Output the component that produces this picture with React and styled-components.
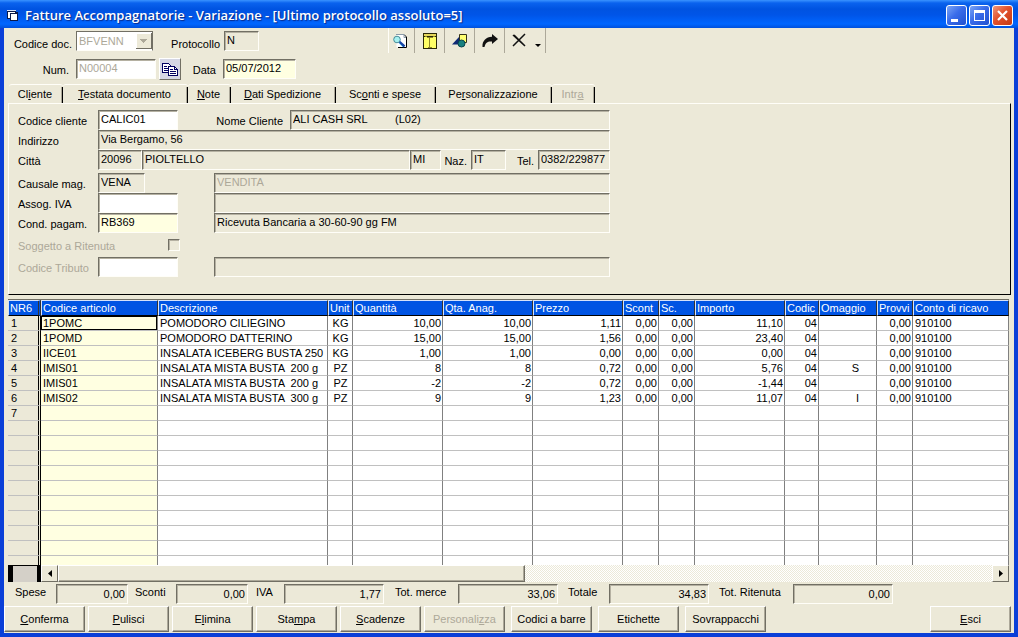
import React from "react";
import styled, { createGlobalStyle } from "styled-components";

const GlobalStyle = createGlobalStyle`
* { box-sizing: border-box; }
body {
  margin: 0;
  background: #ece9d8;
}
body, button, input, select {
  font-family: "Liberation Sans", Arial, sans-serif;
  font-size: 11px;
  line-height: 14px;
  color: #000;
}
`;

const Window = styled.div`
  display: flex;
  flex-direction: column;
  height: 100vh;
  min-height: 480px;
  background: #0a3fd8;
  padding: 0 4px 4px;
`;

const TitleBar = styled.header`
  display: flex;
  align-items: center;
  height: 28px;
  flex: none;
  margin: 0 -4px;
  padding: 2px 5px 0 6px;
  background: linear-gradient(#3a93ff 0, #0a62ee 3px, #0053e1 9px, #0055e8 15px, #0066ff 24px, #0050dc 28px);
`;

const Title = styled.h1`
  flex: 1;
  margin: 0 0 0 6px;
  color: #fff;
  font: 600 13px/20px "Open Sans", "Noto Sans", sans-serif;
  text-shadow: 1px 1px 1px #0a2a88;
  white-space: nowrap;
`;

const CaptionButton = styled.button`
  width: 21px;
  height: 21px;
  margin-left: 2px;
  padding: 0;
  border: 1px solid #fff;
  border-radius: 3px;
  background: ${(p) =>
    p.$close
      ? "linear-gradient(135deg, #f0987c, #e2512c 45%, #c43a14)"
      : "linear-gradient(135deg, #7ba5f5, #3a6cea 45%, #2050cf)"};
  svg { display: block; }
`;

const Client = styled.main`
  display: flex;
  flex-direction: column;
  flex: 1;
  min-height: 0;
  background: #ece9d8;
`;

const Top = styled.div`
  display: flex;
  align-items: flex-start;
  flex: none;
  height: 56px;
`;

const DocFields = styled.div`
  width: 384px;
  flex: none;
  padding-top: 3px;
`;

const Line = styled.div`
  display: flex;
  align-items: ${(p) => (p.$low ? "flex-end" : "center")};
  height: 20px;
  margin-top: ${(p) => p.$top || 0}px;
`;

const Label = styled.label`
  flex: none;
  width: ${(p) => p.$w}px;
  padding-top: 1px;
  padding-right: ${(p) => (p.$near ? 4 : p.$right ? 7 : 0)}px;
  text-align: ${(p) => (p.$right || p.$near ? "right" : "left")};
  color: ${(p) => (p.$off ? "#aca899" : "#000")};
  white-space: nowrap;
`;

const Field = styled.input`
  flex: ${(p) => (p.$w ? "none" : "1")};
  width: ${(p) => (p.$w ? p.$w + "px" : "auto")};
  min-width: 0;
  height: 20px;
  margin-left: ${(p) => p.$left || 0}px;
  padding: ${(p) => (p.$num ? "0 2px" : "0 2px 2px")};
  border: 1px solid;
  border-color: #716f64 #fffef8 #fffef8 #716f64;
  border-radius: 0;
  outline: none;
  box-shadow: inset 1px 1px #b5b1a2;
  background: ${(p) => p.$bg || "#ece9d8"};
  color: ${(p) => (p.$off ? "#aca899" : "#000")};
  text-align: ${(p) => (p.$num ? "right" : "left")};
`;

const SelectBox = styled.div`
  position: relative;
  width: 77px;
  height: 20px;
  svg {
    position: absolute;
    right: 1px;
    top: 2px;
    pointer-events: none;
  }
`;

const Select = styled.select`
  width: 100%;
  height: 20px;
  padding: 0 2px;
  appearance: none;
  border: 1px solid;
  border-color: #716f64 #716f64 #fffef8 #716f64;
  border-radius: 0;
  background: #fff;
  color: #aca899;
  opacity: 1;
`;

const CopyButton = styled.button`
  width: 22px;
  height: 22px;
  margin-left: 3px;
  padding: 2px;
  border: 1px solid;
  border-color: #fff #716f64 #716f64 #fff;
  background: #d4d6e4;
  svg { display: block; }
`;

const Toolbar = styled.div`
  display: flex;
  height: 25px;
  border-left: 1px solid #fffef8;
`;

const ToolButton = styled.button`
  display: flex;
  align-items: center;
  justify-content: ${(p) => (p.$wide ? "flex-start" : "center")};
  width: ${(p) => (p.$wide ? 41 : p.$first ? 26 : 30)}px;
  height: 25px;
  padding: 0 ${(p) => (p.$first ? 4 : 0)}px 0 ${(p) => (p.$wide ? 6 : 0)}px;
  border: 0;
  border-right: 1px solid #aca899;
  background: none;
`;

const Tabs = styled.div`
  display: flex;
  flex: none;
  height: 19px;
  padding-left: 5px;
`;

const Tab = styled.button`
  position: relative;
  width: ${(p) => p.$w}px;
  height: 19px;
  padding: 0 2px 0 0;
  border: 0;
  border-top: 1px solid #fffef8;
  border-radius: 3px 3px 0 0;
  background: none;
  color: ${(p) => (p.disabled ? "#aca899" : "#000")};
  white-space: nowrap;
  &::after {
    content: "";
    position: absolute;
    right: 0;
    top: 2px;
    bottom: 0;
    width: 2px;
    background: linear-gradient(90deg, #aca899 50%, #000 50%);
  }
`;

const Panel = styled.section`
  flex: none;
  margin: 0 3px 0 4px;
  padding: 6px 0 17px 9px;
  border: 1px solid;
  border-color: #fffef8 #000 #000 #fffef8;
`;

const FormBody = styled.div`
  max-width: 592px;
`;

const CheckBox = styled.input`
  appearance: none;
  width: 12px;
  height: 12px;
  margin: 0;
  border: 1px solid;
  border-color: #716f64 #fffef8 #fffef8 #716f64;
  box-shadow: inset 1px 1px #b5b1a2;
  background: #ece9d8;
`;

const GridFrame = styled.section`
  display: flex;
  flex-direction: column;
  flex: 1;
  min-height: 0;
  margin: 4px 5px 0 4px;
  border-top: 1px solid #716f64;
`;

const GridView = styled.div`
  flex: 1;
  min-height: 0;
  overflow: hidden;
  background: #fff;
`;

const Table = styled.table`
  width: 100%;
  table-layout: fixed;
  border-collapse: separate;
  border-spacing: 0;
`;

const HeadCell = styled.th`
  height: 16px;
  padding: 0 0 0 1px;
  overflow: hidden;
  border: 1px solid;
  border-color: #d6e2fa #333 #000 #d6e2fa;
  border-right-width: ${(p) => (p.$first ? 3 : 1)}px;
  border-right-style: ${(p) => (p.$first ? "double" : "solid")};
  background: #0054e3;
  color: #fff;
  font-weight: 400;
  line-height: 14px;
  text-align: left;
  white-space: nowrap;
`;

const Cell = styled.td`
  height: 15px;
  padding: 1px ${(p) => (p.$pad ? p.$pad : 1)}px 0 2px;
  overflow: hidden;
  border-right: 1px solid #808080;
  border-bottom: 1px solid #c0c0c0;
  background: ${(p) => (p.$key ? "#ffffe1" : "#fff")};
  box-shadow: ${(p) => (p.$active ? "inset 0 0 0 1px #000" : "none")};
  line-height: 13px;
  text-align: ${(p) => p.$align || "left"};
  white-space: pre;
`;

const RowHead = styled.th`
  height: 15px;
  padding: 1px 0 0 3px;
  border-right: 3px double #000;
  border-bottom: 1px solid #c0c0c0;
  background: #ece9d8;
  font-weight: 400;
  line-height: 13px;
  text-align: left;
`;

const ScrollRow = styled.div`
  display: flex;
  flex: none;
  height: 17px;
`;

const Splitter = styled.div`
  width: 33px;
  border: solid #000;
  border-width: 1px 4px 0 5px;
  background: #d4d0c8;
`;

const ScrollButton = styled.button`
  display: flex;
  align-items: center;
  justify-content: center;
  width: 17px;
  height: 17px;
  padding: 0;
  border: 1px solid;
  border-color: #fff #716f64 #716f64 #fff;
  background: #ece9d8;
`;

const Track = styled.div`
  flex: 1;
  background: repeating-conic-gradient(#ece9d8 0 25%, #fff 0 50%) 0 0 / 2px 2px;
`;

const Thumb = styled.div`
  width: 50%;
  height: 17px;
  border: 1px solid;
  border-color: #fff #716f64 #716f64 #fff;
  box-shadow: inset -1px -1px #aca899;
  background: #ece9d8;
`;

const Totals = styled.div`
  display: flex;
  flex: none;
  height: 24px;
  padding: 2px 0 0 11px;
`;

const Total = styled.div`
  display: flex;
  margin-right: ${(p) => p.$gap}px;
`;

const Buttons = styled.footer`
  display: flex;
  flex: none;
  gap: 3px;
  height: 27px;
`;

const PushButton = styled.button`
  width: 81px;
  height: 26px;
  padding: 0;
  margin-left: ${(p) => (p.$end ? "auto" : p.$apart ? "3px" : "0")};
  margin-right: ${(p) => (p.$end ? "3px" : "0")};
  border: 1px solid;
  border-color: #fff #716f64 #716f64 #fff;
  box-shadow: inset -1px -1px #aca899;
  background: #ece9d8;
  color: ${(p) => (p.disabled ? "#aca899" : "#000")};
  white-space: nowrap;
`;

const columns = [
  { title: "Codice articolo", w: 117, key: true },
  { title: "Descrizione", w: 170 },
  { title: "Unit", w: 25, align: "center" },
  { title: "Quantità", w: 90, align: "right" },
  { title: "Qta. Anag.", w: 90, align: "right" },
  { title: "Prezzo", w: 90, align: "right" },
  { title: "Scont", w: 36, align: "right" },
  { title: "Sc.", w: 36, align: "right" },
  { title: "Importo", w: 90, align: "right" },
  { title: "Codic", w: 34, align: "right" },
  { title: "Omaggio", w: 58, align: "right", pad: 17 },
  { title: "Provvi", w: 36, align: "right" },
  { title: "Conto di ricavo" },
];

const rows = [
  ["1POMC", "POMODORO CILIEGINO", "KG", "10,00", "10,00", "1,11", "0,00", "0,00", "11,10", "04", "", "0,00", "910100"],
  ["1POMD", "POMODORO DATTERINO", "KG", "15,00", "15,00", "1,56", "0,00", "0,00", "23,40", "04", "", "0,00", "910100"],
  ["IICE01", "INSALATA ICEBERG BUSTA 250", "KG", "1,00", "1,00", "0,00", "0,00", "0,00", "0,00", "04", "", "0,00", "910100"],
  ["IMIS01", "INSALATA MISTA BUSTA  200 g", "PZ", "8", "8", "0,72", "0,00", "0,00", "5,76", "04", "S", "0,00", "910100"],
  ["IMIS01", "INSALATA MISTA BUSTA  200 g", "PZ", "-2", "-2", "0,72", "0,00", "0,00", "-1,44", "04", "", "0,00", "910100"],
  ["IMIS02", "INSALATA MISTA BUSTA  300 g", "PZ", "9", "9", "1,23", "0,00", "0,00", "11,07", "04", "I", "0,00", "910100"],
];

const ROW_COUNT = 17;

const totals = [
  { id: "spese", label: "Spese", lw: 41, w: 72, gap: 7, value: "0,00" },
  { id: "sconti", label: "Sconti", lw: 41, w: 72, gap: 8, value: "0,00" },
  { id: "iva", label: "IVA", lw: 28, w: 100, gap: 11, value: "1,77" },
  { id: "merce", label: "Tot. merce", lw: 63, w: 100, gap: 10, value: "33,06" },
  { id: "totale", label: "Totale", lw: 41, w: 100, gap: 10, value: "34,83" },
  { id: "ritenuta", label: "Tot. Ritenuta", lw: 74, w: 100, gap: 0, value: "0,00" },
];

// "_" marks the accelerator letter
const Accel = ({ text }) => {
  const i = text.indexOf("_");
  if (i < 0) return text;
  return (
    <>
      {text.slice(0, i)}
      <u>{text[i + 1]}</u>
      {text.slice(i + 2)}
    </>
  );
};

const tabs = [
  { text: "Cl_iente", w: 54 },
  { text: "_Testata documento", w: 125 },
  { text: "_Note", w: 43 },
  { text: "_Dati Spedizione", w: 105 },
  { text: "Sc_onti e spese", w: 100 },
  { text: "Pe_rsonalizzazione", w: 116 },
  { text: "Intr_a", w: 43, off: true },
];

const buttons = [
  { text: "_Conferma" },
  { text: "_Pulisci" },
  { text: "E_limina" },
  { text: "Sta_mpa" },
  { text: "_Scadenze" },
  { text: "Personali_zza", off: true },
  { text: "Codici a barre", apart: true },
  { text: "Etichette", apart: true },
  { text: "Sovrappacchi", apart: true },
  { text: "_Esci", end: true },
];

const FormIcon = () => (
  <svg width="13" height="13" viewBox="0 0 13 13" shapeRendering="crispEdges">
    <path d="M1 1h9v2h2v9H4v-2H1z" fill="#0b1a4a" />
    <path d="M2 3h7v1H4v5H2zM5 5h6v6H5z" fill="#fff" />
    <path d="M1 1h9v1H1z" fill="#d8e4fa" />
  </svg>
);

const PreviewIcon = () => (
  <svg width="16" height="16" viewBox="0 0 16 16">
    <path d="M4.5 1.5h8l2 2v11h-10z" fill="#fff" />
    <path d="M12 1.5l2.500 2.500v10.500H6" fill="none" stroke="#000" />
    <path d="M4 1.500h8v3h2" fill="none" stroke="#8a9ba8" />
    <circle cx="5" cy="6.500" r="3.300" fill="#a6f0f0" stroke="#4a8c98" />
    <path d="M7.500 9l5 4.500" stroke="#1745a6" strokeWidth="2.500" />
    <path d="M7 10l4 4" stroke="#5fb7e8" />
  </svg>
);

const BookIcon = () => (
  <svg width="16" height="18" viewBox="0 0 16 18" shapeRendering="crispEdges">
    <path d="M1 1h14v16H1z" fill="#2a2808" />
    <path d="M2 2h12v2H2z" fill="#e5d75a" />
    <path d="M2 5h12v11H2z" fill="#ffff66" />
    <path d="M3 4h2v1h6V4h2v1h-2v1H5V5H3zM7 6h1v9H7zM6 15h4v1H6z" fill="#8f8728" />
  </svg>
);

const ShapesIcon = () => (
  <svg width="16" height="16" viewBox="0 0 16 16">
    <path d="M7.500 1.500h7v8h-7z" fill="#ffff70" stroke="#34331a" />
    <path d="M0 11.500L7 4v7.500z" fill="#102a75" />
    <circle cx="9.500" cy="10.500" r="3.500" fill="#178080" stroke="#07444c" />
  </svg>
);

const ArrowIcon = () => (
  <svg width="16" height="16" viewBox="0 0 16 16">
    <path d="M10 1l6 5-6 5V8.500C6 8 3.500 9.500 2.500 14H.5C0 8 4 4 10 3.800z" fill="#111" />
  </svg>
);

const DeleteIcon = () => (
  <svg width="30" height="18" viewBox="0 0 30 18">
    <path d="M2 3l12 11M3 3l11 11M14 2L2 14" stroke="#111" strokeWidth="1.500" fill="none" />
    <path d="M24 12h6l-3 3z" fill="#000" />
  </svg>
);

const CopyIcon = () => (
  <svg width="16" height="16" viewBox="0 0 16 16" shapeRendering="crispEdges">
    <path d="M.5 2.500h6l2 2v7h-8z" fill="#fff" stroke="#000060" />
    <path d="M2 5h3v1H2zM2 7h5v1H2zM2 9h5v1H2z" fill="#000060" />
    <path d="M6.500 5.500h6l3 3v6h-9z" fill="#fff" stroke="#000060" />
    <path d="M12 5h1v3h3v1h-4zM8 8h3v1H8zM8 10h6v1H8zM8 12h6v1H8z" fill="#000060" />
  </svg>
);

const App = () => {
  return (
    <Window>
      <GlobalStyle />
      <TitleBar>
        <FormIcon />
        <Title>Fatture Accompagnatorie - Variazione - [Ultimo protocollo assoluto=5]</Title>
        <CaptionButton aria-label="Riduci a icona">
          <svg width="19" height="19"><path d="M4 13h7v3H4z" fill="#fff" /></svg>
        </CaptionButton>
        <CaptionButton aria-label="Ingrandisci">
          <svg width="19" height="19"><path d="M4 4h11v11H4zM5 7v7h9V7z" fill="#fff" fillRule="evenodd" /></svg>
        </CaptionButton>
        <CaptionButton $close aria-label="Chiudi">
          <svg width="19" height="19"><path d="M5 5l9 9M14 5l-9 9" stroke="#fff" strokeWidth="2.200" /></svg>
        </CaptionButton>
      </TitleBar>

      <Client>
        <Top>
          <DocFields>
            <Line $low>
              <Label $w={72} $near htmlFor="doc">Codice doc.</Label>
              <SelectBox>
                <Select id="doc" disabled><option>BFVENN</option></Select>
                <svg width="16" height="16" shapeRendering="crispEdges">
                  <path d="M0 0h16v16H0z" fill="#716f64" />
                  <path d="M0 0h15v15H0z" fill="#fff" />
                  <path d="M1 1h14v14H1z" fill="#ece9d8" />
                  <path d="M4 6h7v1h-1v1H9v1H8v1H7V9H6V8H5V7H4z" fill="#aca899" />
                </svg>
              </SelectBox>
              <Label $w={71} $near htmlFor="prot">Protocollo</Label>
              <Field id="prot" $w={35} readOnly value="N" />
            </Line>
            <Line $top={8}>
              <Label $w={72} $right htmlFor="num">Num.</Label>
              <Field id="num" $w={80} $bg="#fff" $off readOnly value="N00004" />
              <CopyButton aria-label="Copia"><CopyIcon /></CopyButton>
              <Label $w={42} $right htmlFor="data">Data</Label>
              <Field id="data" $w={73} $bg="#ffffe1" defaultValue="05/07/2012" />
            </Line>
          </DocFields>
          <Toolbar>
            <ToolButton $first aria-label="Anteprima"><PreviewIcon /></ToolButton>
            <ToolButton aria-label="Registro"><BookIcon /></ToolButton>
            <ToolButton aria-label="Oggetti"><ShapesIcon /></ToolButton>
            <ToolButton aria-label="Inoltra"><ArrowIcon /></ToolButton>
            <ToolButton $wide aria-label="Cancella"><DeleteIcon /></ToolButton>
          </Toolbar>
        </Top>

        <Tabs role="tablist">
          {tabs.map((t, i) => (
            <Tab key={t.text} role="tab" aria-selected={i === 0} $w={t.w} disabled={t.off}>
              <Accel text={t.text} />
            </Tab>
          ))}
        </Tabs>

        <Panel>
          <FormBody>
            <Line>
              <Label $w={80} htmlFor="cliente">Codice cliente</Label>
              <Field id="cliente" $w={80} $bg="#fff" defaultValue="CALIC01" />
              <Label $w={112} $right htmlFor="nome">Nome Cliente</Label>
              <Field id="nome" readOnly value={"ALI CASH SRL\u00a0\u00a0\u00a0\u00a0\u00a0\u00a0\u00a0\u00a0\u00a0(L02)"} />
            </Line>
            <Line>
              <Label $w={80} htmlFor="indirizzo">Indirizzo</Label>
              <Field id="indirizzo" readOnly value="Via Bergamo, 56" />
            </Line>
            <Line>
              <Label $w={80} htmlFor="cap">Città</Label>
              <Field id="cap" $w={44} readOnly value="20096" />
              <Field aria-label="Località" readOnly value="PIOLTELLO" />
              <Field aria-label="Provincia" $w={31} readOnly value="MI" />
              <Label $w={30} $near htmlFor="naz">Naz.</Label>
              <Field id="naz" $w={35} readOnly value="IT" />
              <Label $w={32} $near htmlFor="tel">Tel.</Label>
              <Field id="tel" $w={72} readOnly value="0382/229877" />
            </Line>
            <Line $top={3}>
              <Label $w={80} htmlFor="causale">Causale mag.</Label>
              <Field id="causale" $w={47} readOnly value="VENA" />
              <Field aria-label="Descrizione causale" $left={69} $off readOnly value="VENDITA" />
            </Line>
            <Line>
              <Label $w={80} htmlFor="assog">Assog. IVA</Label>
              <Field id="assog" $w={80} $bg="#fff" />
              <Field aria-label="Descrizione IVA" $left={36} readOnly />
            </Line>
            <Line>
              <Label $w={80} htmlFor="pagam">Cond. pagam.</Label>
              <Field id="pagam" $w={80} $bg="#ffffe1" defaultValue="RB369" />
              <Field aria-label="Descrizione pagamento" $left={36} readOnly value="Ricevuta Bancaria a 30-60-90 gg FM" />
            </Line>
            <Line $top={2}>
              <Label $w={150} $off htmlFor="soggetto">Soggetto a Ritenuta</Label>
              <CheckBox id="soggetto" type="checkbox" disabled />
            </Line>
            <Line $top={2}>
              <Label $w={80} $off htmlFor="tributo">Codice Tributo</Label>
              <Field id="tributo" $w={80} $bg="#fff" />
              <Field aria-label="Descrizione tributo" $left={36} readOnly />
            </Line>
          </FormBody>
        </Panel>

        <GridFrame>
          <GridView>
            <Table>
              <colgroup>
                <col width="33" />
                {columns.map((c) => <col key={c.title} width={c.w} />)}
              </colgroup>
              <thead>
                <tr>
                  <HeadCell $first>NR6</HeadCell>
                  {columns.map((c) => <HeadCell key={c.title}>{c.title}</HeadCell>)}
                </tr>
              </thead>
              <tbody>
                {Array.from({ length: ROW_COUNT }, (_, r) => (
                  <tr key={r}>
                    <RowHead>{r <= rows.length ? r + 1 : ""}</RowHead>
                    {columns.map((c, i) => (
                      <Cell key={c.title} $key={c.key} $align={c.align} $pad={c.pad} $active={r === 0 && i === 0}>
                        {rows[r] ? rows[r][i] : ""}
                      </Cell>
                    ))}
                  </tr>
                ))}
              </tbody>
            </Table>
          </GridView>
          <ScrollRow>
            <Splitter />
            <ScrollButton aria-label="Scorri a sinistra">
              <svg width="4" height="7"><path d="M4 0v7L0 3.500z" /></svg>
            </ScrollButton>
            <Track><Thumb /></Track>
            <ScrollButton aria-label="Scorri a destra">
              <svg width="4" height="7"><path d="M0 0v7l4-3.500z" /></svg>
            </ScrollButton>
          </ScrollRow>
        </GridFrame>

        <Totals>
          {totals.map((t) => (
            <Total key={t.id} $gap={t.gap}>
              <Label $w={t.lw} htmlFor={t.id}>{t.label}</Label>
              <Field id={t.id} $w={t.w} $num readOnly value={t.value} />
            </Total>
          ))}
        </Totals>

        <Buttons>
          {buttons.map((b) => (
            <PushButton key={b.text} disabled={b.off} $apart={b.apart} $end={b.end}>
              <Accel text={b.text} />
            </PushButton>
          ))}
        </Buttons>
      </Client>
    </Window>
  );
};

export default App;
